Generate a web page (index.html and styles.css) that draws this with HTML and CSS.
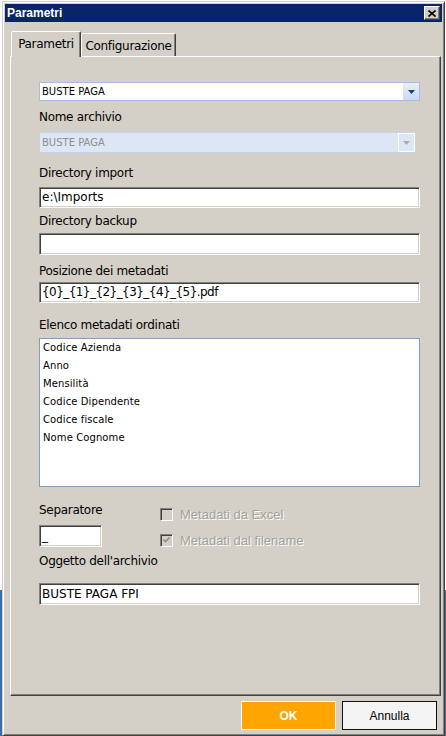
FILE: index.html
```html
<!DOCTYPE html>
<html lang="it">
<head>
<meta charset="utf-8">
<title>Parametri</title>
<link rel="stylesheet" href="styles.css">
</head>
<body>
<div class="window">
  <div class="titlebar">
    <span class="title">Parametri</span>
    <button class="close" aria-label="Chiudi">
      <svg width="8" height="7" viewBox="0 0 8 7"><path d="M0.5 0.5L7.5 6.5M7.5 0.5L0.5 6.5" stroke="#000" stroke-width="1.7" fill="none"/></svg>
    </button>
  </div>
  <div class="tabs">
    <div class="tab active">Parametri</div>
    <div class="tab inactive">Configurazione</div>
  </div>
  <div class="panel">
    <div class="combo">
      <div class="combo-value">BUSTE PAGA</div>
      <div class="combo-arrow"><svg width="7" height="4" viewBox="0 0 7 4"><path d="M0 0H7L3.5 4Z" fill="#1d3f7c"/></svg></div>
    </div>
    <div class="label gap-8">Nome archivio</div>
    <div class="combo disabled gap-7">
      <div class="combo-value">BUSTE PAGA</div>
      <div class="combo-arrow"><svg width="7" height="4" viewBox="0 0 7 4"><path d="M0 0H7L3.5 4Z" fill="#a9adb4"/></svg></div>
    </div>
    <div class="label gap-12">Directory import</div>
    <div class="field gap-6">e:\Imports</div>
    <div class="label gap-5">Directory backup</div>
    <div class="field tall gap-4"></div>
    <div class="label gap-8">Posizione dei metadati</div>
    <div class="field tight gap-3">{0}_{1}_{2}_{3}_{4}_{5}.pdf</div>
    <div class="label gap-14">Elenco metadati ordinati</div>
    <div class="list gap-5">
      <div>Codice Azienda</div>
      <div>Anno</div>
      <div>Mensilità</div>
      <div>Codice Dipendente</div>
      <div>Codice fiscale</div>
      <div>Nome Cognome</div>
    </div>
    <div class="opts">
      <div class="sep-col">
        <div class="label">Separatore</div>
        <div class="field tall sep-field">_</div>
      </div>
      <div class="checks">
        <div class="check"><span class="box"></span><span>Metadati da Excel</span></div>
        <div class="check"><span class="box"><svg width="9" height="9" viewBox="0 0 9 9"><path d="M1.5 3.5L3.5 5.7L7.5 1.5" stroke="#8a8a8a" stroke-width="1.6" fill="none"/></svg></span><span>Metadati dal filename</span></div>
      </div>
    </div>
    <div class="label gap-6">Oggetto dell'archivio</div>
    <div class="field tall gap-14">BUSTE PAGA FPI</div>
  </div>
  <div class="buttons">
    <button class="btn ok">OK</button>
    <button class="btn cancel">Annulla</button>
  </div>
</div>
</body>
</html>
```

FILE: styles.css
```css
* { box-sizing: border-box; }
html, body { margin: 0; padding: 0; }
body {
  width: 446px;
  height: 736px;
  overflow: hidden;
  background: linear-gradient(#ffffff 0, #ffffff 590px, #3a6ea5 590px);
  font-family: "DejaVu Sans", sans-serif;
  color: #000;
}
.window {
  margin: 1px 0 0 2px;
  width: 443px;
  height: 735px;
  background: #d4d0c8;
  border: 1px solid;
  border-color: #d4d0c8 #404040 #404040 #d4d0c8;
  box-shadow: inset 1px 1px #ffffff, inset -1px -1px #808080;
  padding: 2px;
  display: flex;
  flex-direction: column;
}
.titlebar {
  height: 18px;
  flex-shrink: 0;
  background: #0a246a;
  display: flex;
  align-items: center;
  justify-content: space-between;
  padding: 0 2px;
}
.title {
  color: #fff;
  font: bold 12px/18px "Liberation Sans", Arial, sans-serif;
}
.close {
  width: 16px;
  height: 14px;
  padding: 0;
  margin: 0;
  background: #d4d0c8;
  border: 1px solid;
  border-color: #ffffff #404040 #404040 #ffffff;
  box-shadow: inset -1px -1px #808080;
  display: flex;
  align-items: center;
  justify-content: center;
}
.tabs {
  display: flex;
  align-items: flex-end;
  height: 26px;
  flex-shrink: 0;
  margin: 9px 0 -1px 6px;
  position: relative;
  z-index: 1;
}
.tab {
  height: 23px;
  margin-bottom: 1px;
  border: 1px solid;
  border-bottom: 0;
  border-color: #ffffff #404040 transparent #ffffff;
  box-shadow: inset -1px 0 #808080;
  border-radius: 2px 2px 0 0;
  background: #d4d0c8;
  font-size: 12px;
  letter-spacing: -0.3px;
  line-height: 16px;
  padding-top: 4px;
  text-align: center;
  white-space: nowrap;
}
.tab.active { width: 70px; height: 26px; margin-bottom: 0; }
.tab.inactive { width: 95px; }
.panel {
  margin-left: 5px;
  width: 431px;
  height: 640px;
  flex-shrink: 0;
  border: 1px solid;
  border-color: #ffffff #404040 #404040 #ffffff;
  box-shadow: inset -1px -1px #808080;
  padding: 25px 0 0 28px;
  display: flex;
  flex-direction: column;
  align-items: flex-start;
}
.label {
  font-size: 12px;
  letter-spacing: -0.3px;
  line-height: 16px;
  height: 16px;
  white-space: nowrap;
}
.gap-3 { margin-top: 3px; }
.gap-4 { margin-top: 4px; }
.gap-5 { margin-top: 5px; }
.gap-6 { margin-top: 6px; }
.gap-7 { margin-top: 7px; }
.gap-8 { margin-top: 8px; }
.gap-12 { margin-top: 12px; }
.gap-14 { margin-top: 14px; }
.combo {
  width: 381px;
  height: 19px;
  border: 1px solid #a4bde2;
  background: #ffffff;
  display: flex;
}
.combo-value {
  flex: 1;
  padding-left: 2px;
  font-size: 10px;
  line-height: 17px;
  white-space: nowrap;
}
.combo-arrow {
  width: 16px;
  background: linear-gradient(#e6eef9, #cbdaf1);
  display: flex;
  align-items: center;
  justify-content: center;
}
.combo.disabled {
  width: 377px;
  height: 21px;
  background: #dce6f4;
  border-color: #c6d4e9;
}
.combo.disabled .combo-value { color: #8f8f8f; line-height: 19px; }
.combo.disabled .combo-arrow {
  width: 17px;
  background: #dce6f4;
  border: 1px solid #ffffff;
}
.field {
  width: 381px;
  height: 21px;
  background: #ffffff;
  border: 1px solid;
  border-color: #808080 #ffffff #ffffff #808080;
  box-shadow: inset 1px 1px #404040, inset -1px -1px #d4d0c8;
  padding-left: 2px;
  font-size: 12px;
  line-height: 19px;
  white-space: nowrap;
}
.field.tall { height: 22px; line-height: 20px; }
.field.tight { letter-spacing: -0.55px; }
.list {
  width: 381px;
  height: 149px;
  border: 1px solid #7f9db9;
  background: #ffffff;
  padding-left: 3px;
  font-size: 10px;
  letter-spacing: 0.1px;
}
.list div { height: 18px; line-height: 18px; white-space: nowrap; }
.opts { display: flex; margin-top: 15px; }
.sep-col { width: 63px; }
.field.sep-field { width: 63px; margin-top: 7px; }
.checks {
  margin-left: 58px;
  padding-top: 6px;
  display: flex;
  flex-direction: column;
  gap: 13px;
}
.check {
  display: flex;
  align-items: center;
  gap: 7px;
  height: 13px;
  font: 13px/13px "Liberation Sans", Arial, sans-serif;
  color: #a3a19c;
  text-shadow: 1px 1px 0 #ffffff;
  white-space: nowrap;
}
.box {
  width: 13px;
  height: 13px;
  flex-shrink: 0;
  border: 1px solid;
  border-color: #808080 #ffffff #ffffff #808080;
  box-shadow: inset 1px 1px #404040, inset -1px -1px #d4d0c8;
  background: #d4d0c8;
  display: flex;
  align-items: center;
  justify-content: center;
}
.buttons {
  display: flex;
  justify-content: flex-end;
  gap: 6px;
  margin-top: 5px;
  padding-right: 5px;
}
.btn {
  width: 95px;
  height: 29px;
  margin: 0;
  padding: 0;
  border: 1px solid;
  font: 12px "Liberation Sans", Arial, sans-serif;
}
.btn.ok {
  background: #ffa500;
  border-color: #ffffff;
  color: #ffffff;
  font-weight: bold;
}
.btn.cancel {
  background: #f4f4f4;
  border-color: #111111;
  color: #000000;
}
```
